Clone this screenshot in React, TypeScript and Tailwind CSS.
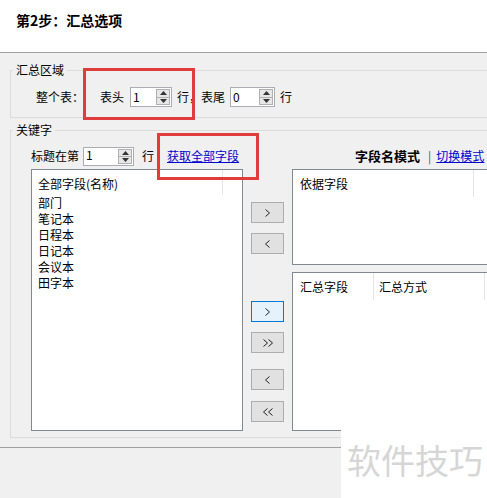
import React from "react";

function Tri({ up }: { up: boolean }) {
  return (
    <svg width="7" height="4" viewBox="0 0 7 4">
      <path d={up ? "M3.5 0L7 4H0z" : "M0 0H7L3.5 4z"} fill="#333" />
    </svg>
  );
}

function Spin({ className, value, top }: { className: string; value: string; top?: boolean }) {
  return (
    <div className={"flex border border-[#abadb3] bg-white " + className}>
      <div className={top ? "flex-1 pl-[2px] text-[12px] leading-[13px]" : "flex-1 pl-[2px] text-[12px] leading-[17px]"}>{value}</div>
      <div className="my-[1px] mr-[1px] flex w-[14px] flex-col border border-[#b0b0b0] bg-[#e6e6e6]">
        <div className="flex flex-1 items-center justify-center border-b border-[#b0b0b0]">
          <Tri up />
        </div>
        <div className="flex flex-1 items-center justify-center">
          <Tri up={false} />
        </div>
      </div>
    </div>
  );
}

function Chev({ left, double }: { left?: boolean; double?: boolean }) {
  const one = left ? "M4.5 0.5L0.5 4L4.5 7.5" : "M0.5 0.5L4.5 4L0.5 7.5";
  return (
    <svg width={double ? 10 : 5} height="8" viewBox={double ? "0 0 10 8" : "0 0 5 8"}>
      <path d={one} stroke="#222" strokeWidth="1" fill="none" />
      {double && <path d={one} transform="translate(5 0)" stroke="#222" strokeWidth="1" fill="none" />}
    </svg>
  );
}

function Btn({ className, children, focus }: { className: string; children: React.ReactNode; focus?: boolean }) {
  return (
    <div
      className={
        (focus ? "border-[#0078d7] bg-[#e5f1fb] " : "border-[#adadad] bg-[#e1e1e1] ") +
        "flex h-[21px] w-[33px] items-center justify-center border " +
        className
      }
    >
      {children}
    </div>
  );
}

export default function App() {
  return (
    <div className="relative h-[498px] w-[487px] overflow-hidden bg-[#f0f0f0] font-['Noto_Sans_CJK_SC','Noto_Sans',sans-serif] text-[12px] leading-[16px] text-black">
      <div className="h-[53px] border-b border-[#a0a0a0] bg-white pl-[16px] pt-[10px]">
        <div className="text-[14px] font-bold leading-[20px]">第2步：汇总选项</div>
      </div>

      <fieldset className="ml-[10px] mt-[9px] w-[490px] border border-[#dcdcdc] pb-[10px]">
        <legend className="ml-[2px] px-[3px] leading-[16px]">汇总区域</legend>
        <div className="mt-[9px] flex h-[20px] items-center pl-[25px]">
          <span>整个表：</span>
          <span className="ml-[16px]">表头</span>
          <Spin className="ml-[6px] h-[20px] w-[42px]" value="1" />
          <span className="ml-[5px]">行</span>
          <span className="w-[12px] overflow-hidden whitespace-nowrap">，</span>
          <span>表尾</span>
          <Spin className="ml-[5px] h-[20px] w-[45px]" value="0" />
          <span className="ml-[5px]">行</span>
        </div>
      </fieldset>

      <fieldset className="ml-[10px] mt-[4px] w-[490px] border border-[#dcdcdc] pb-[6px]">
        <legend className="ml-[2px] px-[3px] leading-[16px]">关键字</legend>
        <div className="mt-[8px] flex h-[20px] items-center pl-[20px]">
          <span>标题在第</span>
          <Spin className="ml-[4px] h-[19px] w-[51px]" value="1" top />
          <span className="ml-[8px]">行</span>
          <span className="ml-[13px] text-[#0000cc] underline">获取全部字段</span>
          <span className="ml-[116px] text-[13px] font-bold">字段名模式</span>
          <span className="ml-[8px] text-[#555]">|</span>
          <span className="ml-[5px] text-[#0000cc] underline">切换模式</span>
        </div>

        <div className="mt-[3px] flex pl-[20px]">
          <div className="h-[262px] w-[212px] border border-[#828790] bg-white">
            <div className="flex h-[25px]">
              <div className="w-[191px] border-r border-[#e5e5e5] pl-[6px] pt-[6px]">全部字段(名称)</div>
            </div>
            <div className="pl-[6px]">
              <div>部门</div>
              <div>笔记本</div>
              <div>日程本</div>
              <div>日记本</div>
              <div>会议本</div>
              <div>田字本</div>
            </div>
          </div>

          <div className="ml-[8px] flex w-[33px] flex-col">
            <Btn className="mt-[33px]"><Chev /></Btn>
            <Btn className="mt-[10px]"><Chev left /></Btn>
            <Btn className="mt-[47px]" focus><Chev /></Btn>
            <Btn className="mt-[10px]"><Chev double /></Btn>
            <Btn className="mt-[16px]"><Chev left /></Btn>
            <Btn className="mt-[11px]"><Chev left double /></Btn>
          </div>

          <div className="ml-[8px] flex flex-col">
            <div className="h-[96px] w-[200px] border border-[#828790] bg-white">
              <div className="flex h-[27px]">
                <div className="w-[181px] border-r border-[#e5e5e5] pl-[7px] pt-[6px]">依据字段</div>
              </div>
            </div>
            <div className="mt-[7px] h-[159px] w-[200px] border border-[#828790] bg-white">
              <div className="flex h-[27px]">
                <div className="w-[81px] border-r border-[#e5e5e5] pl-[7px] pt-[6px]">汇总字段</div>
                <div className="w-[111px] border-r border-[#e5e5e5] pl-[5px] pt-[6px]">汇总方式</div>
              </div>
            </div>
          </div>
        </div>
      </fieldset>

      <div className="mt-[9px] h-px bg-[#a0a0a0]" />

      <div className="pointer-events-none absolute left-[83px] top-[68px] h-[52px] w-[112px] border-[3px] border-[#e03c3c]" />
      <div className="pointer-events-none absolute left-[157px] top-[133px] h-[47px] w-[102px] border-[3px] border-[#e03c3c]" />

      <div className="absolute left-[341px] top-[424px] h-[74px] w-[146px] bg-white pl-[6px] pt-[19px]">
        <div className="whitespace-nowrap text-[34px] leading-none text-[#d6d6d6]">软件技巧</div>
      </div>
    </div>
  );
}
